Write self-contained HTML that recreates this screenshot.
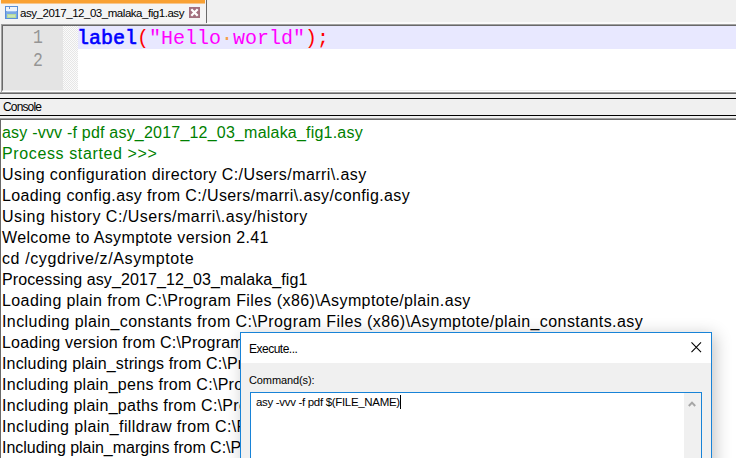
<!DOCTYPE html>
<html><head><meta charset="utf-8">
<style>
*{margin:0;padding:0;box-sizing:border-box}
html,body{width:736px;height:458px;overflow:hidden;background:#f0f0f0;font-family:"Liberation Sans",sans-serif}
.a{position:absolute}
#tab{left:0;top:0;width:206px;height:24px;background:#f4f4f4}
#tabor{left:1px;top:0;width:204px;height:3px;background:#f9a133;border-bottom:1px solid #f6c68e;box-sizing:content-box}
#tabr{left:206px;top:0;width:1px;height:23px;background:#6a6a6a}
#tabwl{left:207px;top:22px;width:529px;height:2px;background:#fafafa}
#tabtxt{left:20px;top:6px;font-size:11.5px;letter-spacing:-0.46px;color:#000;white-space:nowrap;line-height:14px}
#editor{left:1px;top:24px;width:735px;height:68px;background:#fff;border-top:1px solid #a0a0a0;border-left:1px solid #a0a0a0}
#ed2{left:2px;top:25px;width:734px;height:66px;border-top:1px solid #696969;border-left:1px solid #696969;border-bottom:1px solid #f0f0f0}
#margin{left:3px;top:26px;width:60px;height:64px;background:#e4e4e4}
#fold{left:63px;top:26px;width:15px;height:64px;background-color:#fbfbfb;background-image:linear-gradient(45deg,#e6e6e6 25%,transparent 25%,transparent 75%,#e6e6e6 75%),linear-gradient(45deg,#e6e6e6 25%,transparent 25%,transparent 75%,#e6e6e6 75%);background-size:2px 2px;background-position:0 0,1px 1px}
#hl{left:78px;top:26px;width:658px;height:23px;background:#e8e8ff}
.ln{font-family:"Liberation Mono",monospace;font-size:20px;color:#959595;width:41px;transform:scaleX(0.82);transform-origin:35px 50%;text-align:right;line-height:23px}
.code{font-family:"Liberation Mono",monospace;font-size:20px;line-height:23px;white-space:pre}
.kw{color:#0000ff;font-weight:normal;-webkit-text-stroke:0.6px #0000ff}
.op{color:#ff0000}
.str{color:#ff00ff}
#spl1{left:0;top:92px;width:736px;height:1px;background:#a0a0a0}
#spl2{left:0;top:93px;width:736px;height:1px;background:#696969}
#ch1{left:0;top:98px;width:736px;height:1px;background:#000}
#ch2{left:0;top:115px;width:736px;height:1px;background:#000}
#chtxt{left:3px;top:100px;font-size:12px;letter-spacing:-0.85px;line-height:14px;color:#000}
#cb1{left:0;top:118px;width:736px;height:1px;background:#a0a0a0}
#cb2{left:0;top:119px;width:736px;height:1px;background:#696969}
#console{left:1px;top:120px;width:735px;height:338px;background:#fff}
#cl{left:0;top:119px;width:1px;height:339px;background:#696969}
.cline{position:absolute;left:2px;font-size:16px;line-height:21px;white-space:nowrap;color:#000}
.g{color:#008000}
#dlg{left:240px;top:332px;width:472px;height:140px;background:#f0f0f0;border:1px solid #1883d7;box-shadow:3px 3px 16px rgba(0,0,0,0.24)}
#dlgtitle{left:0;top:0;width:470px;height:30px;background:#fff}
#dlgt{left:8px;top:9px;font-size:12px;letter-spacing:-0.5px;line-height:14px;color:#000}
#dlgx{left:450px;top:9px;width:10.5px;height:10.5px}
#cmdlbl{left:8px;top:40px;font-size:11px;letter-spacing:-0.1px;line-height:14px;color:#000}
#tb{left:9px;top:59px;width:452px;height:80px;background:#fff;border:1px solid #1883d7}
#tbt{left:5px;top:2px;font-size:11.5px;letter-spacing:-0.32px;line-height:14px;color:#000;white-space:nowrap}
#sb{left:433px;top:0;width:17px;height:80px;background:#f0f0f0}
</style></head><body>
<div class="a" id="tab"></div>
<div class="a" id="tabor"></div>
<div class="a" id="tabr"></div>
<div class="a" id="tabwl"></div>
<svg class="a" style="left:5px;top:6px" width="13" height="13" viewBox="0 0 13 13">
<rect x="0" y="0" width="13" height="13" fill="#5a8fd8"/>
<rect x="1" y="1" width="11" height="11" fill="#7aa8e6"/>
<rect x="1" y="1" width="11" height="4" fill="#eef4fc"/>
<rect x="4" y="1" width="1" height="2" fill="#6a8fd0"/>
<rect x="2" y="5" width="9" height="1" fill="#9cc0ee"/>
<rect x="2" y="8" width="9" height="4" fill="#b6db9e"/>
<rect x="3" y="9" width="7" height="2" fill="#c9e6b4"/>
</svg>
<div class="a" id="tabtxt">asy_2017_12_03_malaka_fig1.asy</div>
<svg class="a" style="left:189px;top:7px" width="11" height="11" viewBox="0 0 11 11">
<rect x="0" y="0" width="11" height="11" fill="#a3707f"/>
<path d="M2.3 2.3L8.7 8.7M8.7 2.3L2.3 8.7" stroke="#fff" stroke-width="2.3"/>
</svg>

<div class="a" id="editor"></div>
<div class="a" id="ed2"></div>
<div class="a" id="margin"></div>
<div class="a" id="fold"></div>
<div class="a" id="hl"></div>
<div class="a ln" style="left:3px;top:26px">1</div>
<div class="a ln" style="left:3px;top:49px">2</div>
<div class="a code" style="left:77px;top:27px"><span class="kw">label</span><span class="op">(</span><span class="str">"Hello<span style="color:#f5a04a">&#183;</span>world"</span><span class="op">);</span></div>

<div class="a" id="spl1"></div>
<div class="a" id="spl2"></div>
<div class="a" id="ch1"></div>
<div class="a" id="ch2"></div>
<div class="a" id="chtxt">Console</div>
<div class="a" id="cb1"></div>
<div class="a" id="cb2"></div>
<div class="a" id="console"></div>
<div class="a" id="cl"></div>

<div class="cline g" style="top:122px;letter-spacing:0.207px">asy -vvv -f pdf asy_2017_12_03_malaka_fig1.asy</div>
<div class="cline g" style="top:143px;letter-spacing:0.622px">Process started &gt;&gt;&gt;</div>
<div class="cline" style="top:164px;letter-spacing:0.417px">Using configuration directory C:/Users/marri\.asy</div>
<div class="cline" style="top:185px;letter-spacing:0.377px">Loading config.asy from C:/Users/marri\.asy/config.asy</div>
<div class="cline" style="top:206px;letter-spacing:0.495px">Using history C:/Users/marri\.asy/history</div>
<div class="cline" style="top:227px;letter-spacing:0.359px">Welcome to Asymptote version 2.41</div>
<div class="cline" style="top:248px;letter-spacing:0.600px">cd /cygdrive/z/Asymptote</div>
<div class="cline" style="top:269px;letter-spacing:0.106px">Processing asy_2017_12_03_malaka_fig1</div>
<div class="cline" style="top:290px;letter-spacing:0.395px">Loading plain from C:\Program Files (x86)\Asymptote/plain.asy</div>
<div class="cline" style="top:311px;letter-spacing:0.417px">Including plain_constants from C:\Program Files (x86)\Asymptote/plain_constants.asy</div>
<div class="cline" style="top:332px;letter-spacing:0.200px">Loading version from C:\Program Files (x86)\Asymptote/version.asy</div>
<div class="cline" style="top:353px;letter-spacing:0.166px">Including plain_strings from C:\Program Files (x86)\Asymptote/plain_strings.asy</div>
<div class="cline" style="top:374px;letter-spacing:0.290px">Including plain_pens from C:\Program Files (x86)\Asymptote/plain_pens.asy</div>
<div class="cline" style="top:395px;letter-spacing:0.290px">Including plain_paths from C:\Program Files (x86)\Asymptote/plain_paths.asy</div>
<div class="cline" style="top:416px;letter-spacing:0.370px">Including plain_filldraw from C:\Program Files (x86)\Asymptote/plain_filldraw.asy</div>
<div class="cline" style="top:437px;letter-spacing:-0.030px">Including plain_margins from C:\Program Files (x86)\Asymptote/plain_margins.asy</div>

<div class="a" id="dlg">
 <div class="a" id="dlgtitle"></div>
 <div class="a" id="dlgt">Execute...</div>
 <svg class="a" id="dlgx" viewBox="0 0 11 11"><path d="M0.5 0.5L10.5 10.5M10.5 0.5L0.5 10.5" stroke="#000" stroke-width="1.15"/></svg>
 <div class="a" id="cmdlbl">Command(s):</div>
 <div class="a" id="tb">
  <div class="a" id="tbt">asy -vvv -f pdf $(FILE_NAME)<span style="display:inline-block;width:1px;height:14px;background:#000;vertical-align:-3px"></span></div>
  <div class="a" id="sb"><svg class="a" style="left:4px;top:7px" width="8" height="7" viewBox="0 0 8 7"><path d="M0.8 6L4 2.6L7.2 6" stroke="#a6a6a6" stroke-width="2" fill="none"/></svg></div>
 </div>
</div>
</body></html>
